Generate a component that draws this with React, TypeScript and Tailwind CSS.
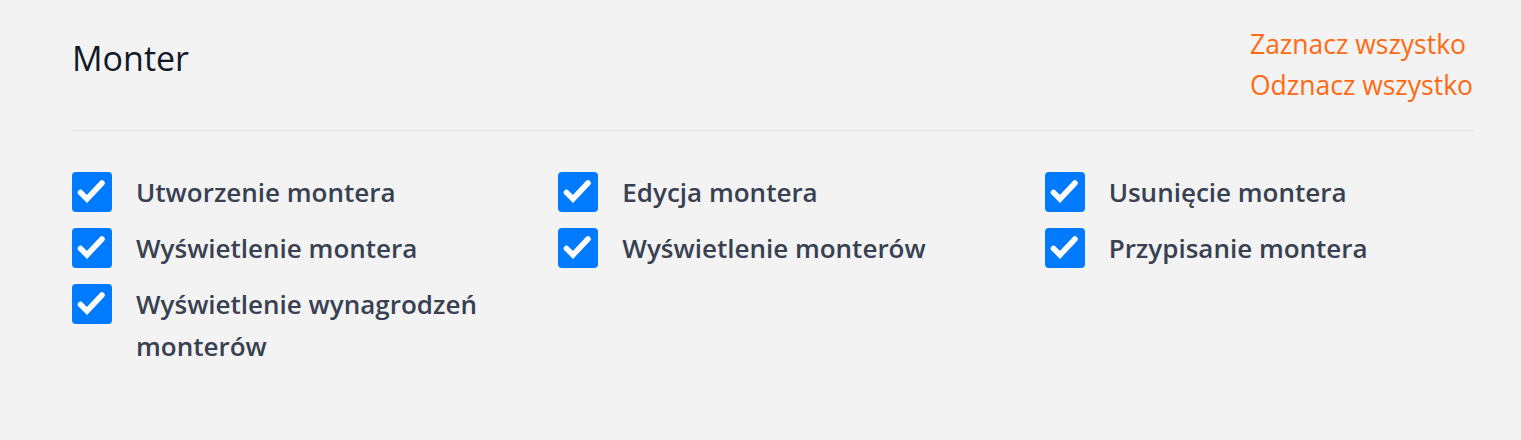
import React from "react";

const permissions = [
  "Utworzenie montera",
  "Edycja montera",
  "Usunięcie montera",
  "Wyświetlenie montera",
  "Wyświetlenie monterów",
  "Przypisanie montera",
  "Wyświetlenie wynagrodzeń monterów",
];

function CheckBox() {
  return (
    <span className="block h-10 w-10 shrink-0 rounded-[4px] bg-[#007bff]">
      <svg viewBox="0 0 40 40" className="h-10 w-10" fill="none">
        <path
          d="M8.5 20.5L15 27L30 11"
          stroke="white"
          strokeWidth="5.5"
          strokeLinecap="round"
          strokeLinejoin="miter"
        />
      </svg>
    </span>
  );
}

export default function App() {
  return (
    <div
      className="min-h-[440px] w-full bg-[#f3f3f3] pl-[72px] pr-[48px] pt-[24px]"
      style={{ fontFamily: '"Open Sans", "Noto Sans", sans-serif' }}
    >
      {/* Header */}
      <div className="flex items-start justify-between">
        <h1 className="mt-[14px] text-[34px] leading-[40px] font-normal text-[#111827]">
          Monter
        </h1>
        <div className="flex flex-col text-[26.5px] leading-[41px] text-[#ff6a13]">
          <a href="#" className="block">Zaznacz wszystko</a>
          <a href="#" className="block">Odznacz wszystko</a>
        </div>
      </div>

      <div className="mt-[24px] border-t border-[#e0e0e0]" />

      {/* Permissions */}
      <div className="mt-[40px] grid grid-cols-3 gap-x-[58px] gap-y-[14px]">
        {permissions.map((label) => (
          <label key={label} className="flex items-start gap-6">
            <span className="mt-[1px]">
              <CheckBox />
            </span>
            <span className="text-[26px] leading-[42px] font-semibold text-[#374151]">
              {label}
            </span>
          </label>
        ))}
      </div>
    </div>
  );
}
